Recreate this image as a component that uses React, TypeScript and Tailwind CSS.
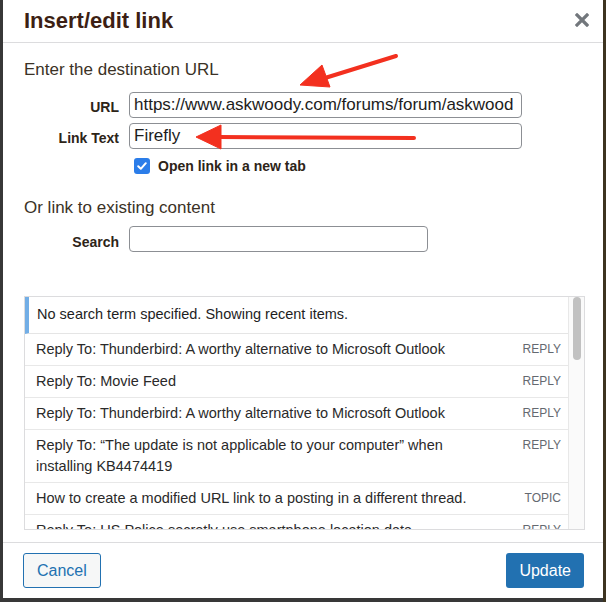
import React from "react";

const items: { title: string; kind: string }[] = [
  { title: "Reply To: Thunderbird: A worthy alternative to Microsoft Outlook", kind: "REPLY" },
  { title: "Reply To: Movie Feed", kind: "REPLY" },
  { title: "Reply To: Thunderbird: A worthy alternative to Microsoft Outlook", kind: "REPLY" },
  { title: "Reply To: \u201CThe update is not applicable to your computer\u201D when installing KB4474419", kind: "REPLY" },
  { title: "How to create a modified URL link to a posting in a different thread.", kind: "TOPIC" },
  { title: "Reply To: US Police secretly use smartphone location data", kind: "REPLY" },
];

export default function App() {
  return (
    <div className="w-[606px] h-[602px] bg-[#383838] overflow-hidden relative" style={{ fontFamily: '"Liberation Sans", Arial, sans-serif' }}>
      <div className="absolute right-0 top-0 w-[3px] h-[602px] bg-[#3d3420]" />
      <div className="ml-[3px] w-[600px] h-[598px] bg-white flex flex-col relative">
        {/* header */}
        <div className="h-[43px] border-b border-[#dcdcde] flex items-start justify-between pl-[21px] pr-[14px]">
          <h1 className="text-[22px] font-bold leading-[42px] text-[#3d1f14]">Insert/edit link</h1>
          <svg width="14" height="14" viewBox="0 0 14 14" className="mt-[13px]">
            <path d="M2 2 L12 12 M12 2 L2 12" stroke="#72777c" strokeWidth="3.2" strokeLinecap="square" />
          </svg>
        </div>

        {/* body */}
        <div className="h-[499px] pl-[21px] flex flex-col">
          <div className="mt-[17px] h-[20px] text-[17px] leading-[20px] text-[#3b3226]">Enter the destination URL</div>
          <div className="mt-[12px] flex items-center h-[26px]">
            <label className="relative top-[2px] w-[95px] text-right text-[14px] font-bold text-[#2d2418]">URL</label>
            <div className="ml-[10px] w-[393px] h-[26px] border border-[#8c8f94] rounded-[4px] pl-[4px] text-[17px] leading-[24px] text-[#1d1d1d] overflow-hidden whitespace-nowrap">
              https://www.askwoody.com/forums/forum/askwood
            </div>
          </div>
          <div className="mt-[5px] flex items-center h-[26px]">
            <label className="relative top-[2px] w-[95px] text-right text-[14px] font-bold text-[#2d2418]">Link Text</label>
            <div className="ml-[10px] w-[393px] h-[26px] border border-[#8c8f94] rounded-[4px] pl-[4px] text-[17px] leading-[24px] text-[#1d1d1d] overflow-hidden whitespace-nowrap">
              Firefly
            </div>
          </div>
          <div className="mt-[8px] flex items-center h-[18px] pl-[110px]">
            <div className="w-[16px] h-[16px] rounded-[3px] bg-[#2b7de9] flex items-center justify-center">
              <svg width="12" height="12" viewBox="0 0 12 12">
                <path d="M2.2 6.3 L4.8 8.8 L9.8 3.2" stroke="white" strokeWidth="2" fill="none" strokeLinecap="round" strokeLinejoin="round" />
              </svg>
            </div>
            <span className="ml-[8px] text-[14px] font-bold text-[#2d2418]">Open link in a new tab</span>
          </div>

          <div className="mt-[23px] h-[20px] text-[17px] leading-[20px] text-[#3b3226]">Or link to existing content</div>
          <div className="mt-[8px] flex items-center h-[26px]">
            <label className="relative top-[3px] w-[95px] text-right text-[14px] font-bold text-[#2d2418]">Search</label>
            <div className="ml-[10px] w-[299px] h-[26px] border border-[#8c8f94] rounded-[4px]" />
          </div>

          {/* results */}
          <div className="mt-[44px] w-[561px] h-[234px] border border-[#dcdcde] flex overflow-hidden">
            <div className="flex-1 flex flex-col overflow-hidden">
              <div className="border-l-4 border-[#72aee6] border-b border-b-[#e5e5e5] pl-[8px] pt-[7px] pb-[8px] text-[14.5px] leading-[21px] text-[#1e1e1e] whitespace-nowrap">
                No search term specified. Showing recent items.
              </div>
              {items.map((it, i) => (
                <div key={i} className="flex justify-between items-start border-b border-[#e8e8e8] pl-[11px] pr-[7px] py-[5px] text-[14.5px] leading-[21px]">
                  <span className="w-[448px] text-[#2a2a2a]">{it.title}</span>
                  <span className="text-[12px] leading-[21px] text-[#646970] shrink-0">{it.kind}</span>
                </div>
              ))}
            </div>
            <div className="w-[16px] border-l border-[#e8e8e8] bg-[#fafafa] flex justify-center">
              <div className="w-[8px] h-[63px] rounded-full bg-[#c1c1c1]" />
            </div>
          </div>
        </div>

        {/* footer */}
        <div className="h-[56px] border-t border-[#dcdcde] flex items-start justify-between pl-[20px] pr-[19px] pt-[10px]">
          <button className="h-[35px] px-[13px] border border-[#2271b1] rounded-[3px] bg-[#f6f7f7] text-[#2271b1] text-[16px]">Cancel</button>
          <button className="h-[35px] px-[13px] rounded-[3px] bg-[#2271b1] text-white text-[16px]">Update</button>
        </div>

        {/* red arrows */}
        <svg className="absolute left-0 top-0 pointer-events-none" width="600" height="200">
          <g fill="#f3301f" stroke="#f3301f">
            <line x1="393" y1="56" x2="322" y2="78" strokeWidth="4" strokeLinecap="round" />
            <polygon points="297,85 319,65 327,87" strokeWidth="1" />
            <line x1="411" y1="138" x2="215" y2="137" strokeWidth="4" strokeLinecap="round" />
            <polygon points="193,137 218,125 218,149" strokeWidth="1" />
          </g>
        </svg>
      </div>
    </div>
  );
}
